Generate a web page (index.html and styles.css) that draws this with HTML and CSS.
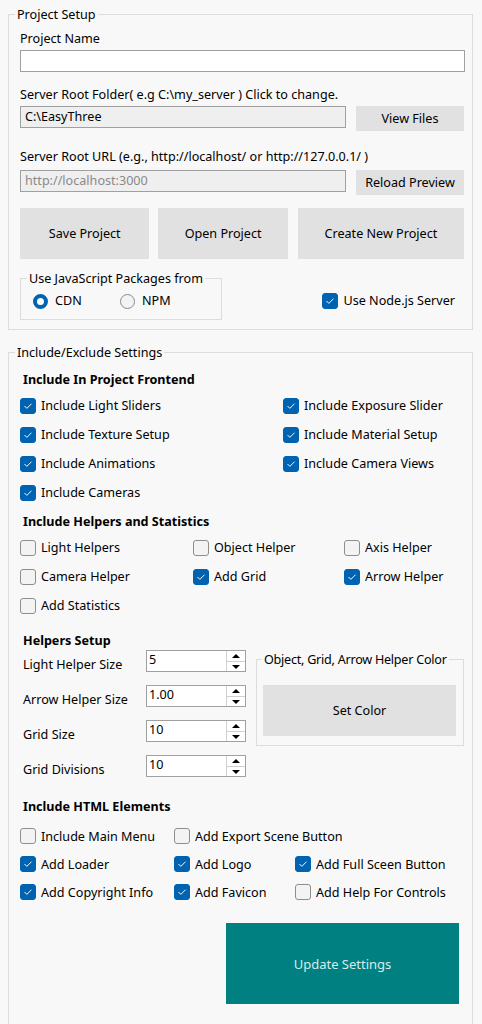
FILE: index.html
```html
<!DOCTYPE html>
<html>
<head>
<meta charset="utf-8">
<title>Project Setup</title>
<link rel="stylesheet" href="styles.css">
</head>
<body>
<div class="page">
  <fieldset class="group project">
    <legend>Project Setup</legend>
    <div class="lbl first">Project Name</div>
    <div class="field full"></div>
    <div class="lbl l-folder">Server Root Folder( e.g C:\my_server ) Click to change.</div>
    <div class="row r-folder">
      <div class="field ro">C:\EasyThree</div>
      <div class="btn side">View Files</div>
    </div>
    <div class="lbl l-url">Server Root URL (e.g., http://localhost/ or http://127.0.0.1/ )</div>
    <div class="row r-url">
      <div class="field ro dim">http://localhost:3000</div>
      <div class="btn side">Reload Preview</div>
    </div>
    <div class="bigrow">
      <div class="btn big w130">Save Project</div>
      <div class="btn big w130">Open Project</div>
      <div class="btn big w166">Create New Project</div>
    </div>
    <div class="bottomrow">
      <fieldset class="group pkg">
        <legend>Use JavaScript Packages from</legend>
        <div class="radios">
          <span class="opt"><span class="radio on"></span>CDN</span>
          <span class="opt"><span class="radio"></span>NPM</span>
        </div>
      </fieldset>
      <span class="opt node"><span class="cb on"><svg viewBox="0 0 16 16"><path d="M4.3 8.3l2.4 2.4 5-5"/></svg></span>Use Node.js Server</span>
    </div>
  </fieldset>

  <fieldset class="group settings">
    <legend>Include/Exclude Settings</legend>
    <div class="title t1">Include In Project Frontend</div>
    <div class="grid g-front">
      <span class="opt"><span class="cb on"><svg viewBox="0 0 16 16"><path d="M4.3 8.3l2.4 2.4 5-5"/></svg></span>Include Light Sliders</span>
      <span class="opt"><span class="cb on"><svg viewBox="0 0 16 16"><path d="M4.3 8.3l2.4 2.4 5-5"/></svg></span>Include Exposure Slider</span>
      <span class="opt"><span class="cb on"><svg viewBox="0 0 16 16"><path d="M4.3 8.3l2.4 2.4 5-5"/></svg></span>Include Texture Setup</span>
      <span class="opt"><span class="cb on"><svg viewBox="0 0 16 16"><path d="M4.3 8.3l2.4 2.4 5-5"/></svg></span>Include Material Setup</span>
      <span class="opt"><span class="cb on"><svg viewBox="0 0 16 16"><path d="M4.3 8.3l2.4 2.4 5-5"/></svg></span>Include Animations</span>
      <span class="opt"><span class="cb on"><svg viewBox="0 0 16 16"><path d="M4.3 8.3l2.4 2.4 5-5"/></svg></span>Include Camera Views</span>
      <span class="opt"><span class="cb on"><svg viewBox="0 0 16 16"><path d="M4.3 8.3l2.4 2.4 5-5"/></svg></span>Include Cameras</span>
    </div>
    <div class="title t2">Include Helpers and Statistics</div>
    <div class="grid g-help">
      <span class="opt"><span class="cb"></span>Light Helpers</span>
      <span class="opt"><span class="cb"></span>Object Helper</span>
      <span class="opt"><span class="cb"></span>Axis Helper</span>
      <span class="opt"><span class="cb"></span>Camera Helper</span>
      <span class="opt"><span class="cb on"><svg viewBox="0 0 16 16"><path d="M4.3 8.3l2.4 2.4 5-5"/></svg></span>Add Grid</span>
      <span class="opt"><span class="cb on"><svg viewBox="0 0 16 16"><path d="M4.3 8.3l2.4 2.4 5-5"/></svg></span>Arrow Helper</span>
      <span class="opt"><span class="cb"></span>Add Statistics</span>
    </div>
    <div class="title t3">Helpers Setup</div>
    <div class="setup">
      <div class="spins">
        <div class="spinrow"><span class="slbl">Light Helper Size</span><div class="spin"><span class="val">5</span><span class="arrows"><span class="up"></span><span class="dn"></span></span></div></div>
        <div class="spinrow"><span class="slbl">Arrow Helper Size</span><div class="spin"><span class="val">1.00</span><span class="arrows"><span class="up"></span><span class="dn"></span></span></div></div>
        <div class="spinrow"><span class="slbl">Grid Size</span><div class="spin"><span class="val">10</span><span class="arrows"><span class="up"></span><span class="dn"></span></span></div></div>
        <div class="spinrow"><span class="slbl">Grid Divisions</span><div class="spin"><span class="val">10</span><span class="arrows"><span class="up"></span><span class="dn"></span></span></div></div>
      </div>
      <fieldset class="group color">
        <legend>Object, Grid, Arrow Helper Color</legend>
        <div class="btn setcolor">Set Color</div>
      </fieldset>
    </div>
    <div class="title t4">Include HTML Elements</div>
    <div class="grid g-html">
      <span class="opt"><span class="cb"></span>Include Main Menu</span>
      <span class="opt"><span class="cb"></span>Add Export Scene Button</span>
      <span class="opt"></span>
      <span class="opt"><span class="cb on"><svg viewBox="0 0 16 16"><path d="M4.3 8.3l2.4 2.4 5-5"/></svg></span>Add Loader</span>
      <span class="opt"><span class="cb on"><svg viewBox="0 0 16 16"><path d="M4.3 8.3l2.4 2.4 5-5"/></svg></span>Add Logo</span>
      <span class="opt"><span class="cb on"><svg viewBox="0 0 16 16"><path d="M4.3 8.3l2.4 2.4 5-5"/></svg></span>Add Full Sceen Button</span>
      <span class="opt"><span class="cb on"><svg viewBox="0 0 16 16"><path d="M4.3 8.3l2.4 2.4 5-5"/></svg></span>Add Copyright Info</span>
      <span class="opt"><span class="cb on"><svg viewBox="0 0 16 16"><path d="M4.3 8.3l2.4 2.4 5-5"/></svg></span>Add Favicon</span>
      <span class="opt"><span class="cb"></span>Add Help For Controls</span>
    </div>
    <div class="updrow">
      <div class="btn update">Update Settings</div>
    </div>
  </fieldset>
</div>
</body>
</html>
```

FILE: styles.css
```css
* { box-sizing: border-box; }
html, body { margin: 0; padding: 0; }
body {
  background: #f8f8f8;
  font-family: "Noto Sans", "Open Sans", sans-serif;
  font-size: 12.6px;
  line-height: 18px;
  color: #000;
  overflow: hidden;
  height: 1024px;
}
.page { padding: 5px 0 0 8px; width: 474px; }

.group {
  border: 1px solid #dcdcdc;
  margin: 0;
  min-width: 0;
}
.group > legend {
  padding: 1px 2px 0;
  line-height: 18px;
  height: 18px;
  white-space: nowrap;
}
.project { width: 465px; padding: 6px 8px 9px 11px; }
.project > legend { margin-left: -5px; }

.lbl { height: 18px; padding-top: 1px; white-space: nowrap; }
.l-folder { margin-top: 13px; }
.l-url { margin-top: 16px; }

.field {
  height: 22px;
  border: 1px solid #a0a0a0;
  background: #fff;
  padding: 0 4px;
  line-height: 20px;
  white-space: nowrap;
}
.full { margin-top: 3px; width: 445px; }
.ro { background: #efefef; width: 326px; }
.dim { color: #8a8a8a; }

.row { display: flex; align-items: flex-start; gap: 10px; }
.r-folder { margin-top: 3px; }
.r-url { margin-top: 5px; }

.btn {
  background: #e1e1e1;
  display: flex;
  align-items: center;
  justify-content: center;
  white-space: nowrap;
  padding-top: 1px;
}
.side { width: 108px; height: 25px; }
.bigrow { display: flex; gap: 9px; margin-top: 13px; }
.big { height: 51px; }
.w130 { width: 130px; }
.w166 { width: 167px; margin-left: 1px; }

.bottomrow {
  display: flex;
  align-items: flex-start;
  justify-content: space-between;
  margin-top: 10px;
}
.pkg { width: 202px; padding: 5px 8px 9px 11px; }
.pkg > legend { margin-left: -5px; }
.radios { display: flex; height: 18px; }
.radios .opt:first-child { width: 88px; }

.opt { display: inline-flex; align-items: center; white-space: nowrap; height: 18px; }
.radio {
  width: 15px; height: 15px;
  border-radius: 50%;
  border: 1px solid #8a8a8a;
  background: #f3f3f3;
  margin-right: 7px;
  flex: none;
}
.radio.on {
  border: 4px solid #0063b1;
  background: #fff;
}
.radios .opt:first-child .radio { margin-left: 1px; }

.cb {
  width: 16px; height: 16px;
  border-radius: 3px;
  border: 1px solid #8e8e8e;
  background: #f3f3f3;
  margin-right: 5px;
  flex: none;
  display: flex;
}
.cb.on { background: #0063b1; border-color: #0063b1; }
.cb svg { width: 14px; height: 14px; }
.cb path { fill: none; stroke: #fff; stroke-width: 1.1; stroke-linecap: round; stroke-linejoin: round; }
.node { margin-top: 23px; margin-right: 9px; }

.settings { width: 465px; margin-top: 13px; padding: 9px 8px 40px 11px; }
.settings > legend { margin-left: -5px; }

.title { font-weight: 700; height: 18px; padding-left: 3px; padding-top: 1px; white-space: nowrap; }
.t2 { margin-top: 5px; }
.t3 { margin-top: 11px; }
.t4 { margin-top: 20px; }

.grid { display: grid; margin-top: 3px; }
.g-front { grid-template-columns: 263px 1fr; grid-auto-rows: 29px; }
.g-help { grid-template-columns: 173px 151px 1fr; grid-auto-rows: 29px; }
.g-html { grid-template-columns: 154px 121px 1fr; grid-auto-rows: 28px; margin-top: 7px; }
.grid .opt { height: auto; padding-top: 1px; }
.grid .opt .cb { margin-top: -1px; }

.setup { display: flex; align-items: flex-start; gap: 10px; }
.spins { display: flex; flex-direction: column; gap: 13px; padding-top: 1px; }
.spinrow { display: flex; align-items: flex-start; height: 22px; }
.slbl { width: 126px; padding-left: 3px; padding-top: 6px; white-space: nowrap; }
.spin {
  width: 100px; height: 22px;
  border: 1px solid #a0a0a0;
  background: #fff;
  display: flex;
}
.val { flex: 1; padding-left: 2px; line-height: 18px; }
.arrows { width: 19px; border-left: 1px solid #d0d0d0; display: flex; flex-direction: column; }
.arrows span { flex: 1; position: relative; }
.arrows .up { border-bottom: 1px solid #d0d0d0; }
.arrows .up::after, .arrows .dn::after {
  content: ""; position: absolute; left: 5px; width: 0; height: 0;
  border-left: 4px solid transparent; border-right: 4px solid transparent;
}
.arrows .up::after { top: 3px; border-bottom: 4px solid #000; }
.arrows .dn::after { top: 3px; border-top: 4px solid #000; }

.color { width: 208px; margin-top: 1px; padding: 17px 7px 9px 6px; }
.color > legend { margin-left: -1px; letter-spacing: -0.25px; }
.setcolor { height: 51px; width: 193px; }

.updrow { display: flex; justify-content: flex-end; margin-top: 17px; padding-right: 5px; }
.update {
  width: 233px; height: 81px;
  background: #008080;
  color: #d8ecec;
  font-size: 13px;
}
```
